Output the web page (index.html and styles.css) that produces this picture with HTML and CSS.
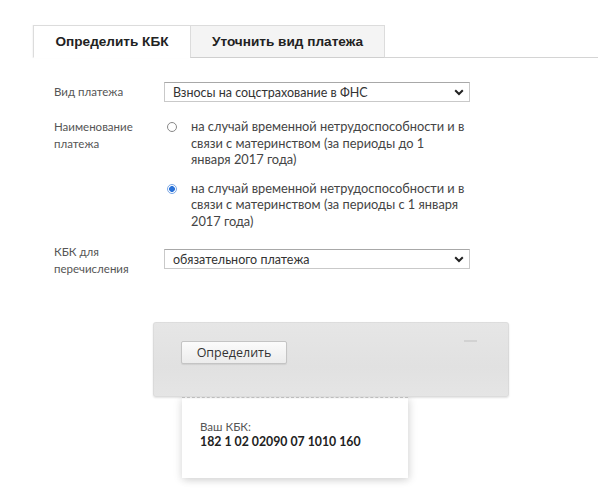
FILE: index.html
```html
<!DOCTYPE html>
<html lang="ru">
<head>
<meta charset="utf-8">
<link rel="stylesheet" href="styles.css">
</head>
<body>
<div class="page">
  <div class="tabs">
    <div class="tab active">Определить КБК</div>
    <div class="tab">Уточнить вид платежа</div>
    <div class="tab-rest"></div>
  </div>
  <div class="form">
    <div class="row row-select1">
      <div class="label">Вид платежа</div>
      <div class="select">
        <span>Взносы на соцстрахование в ФНС</span>
        <svg class="chev" width="10" height="7" viewBox="0 0 10 7"><path d="M1.2 1.3 L5 5 L8.8 1.3" fill="none" stroke="#222" stroke-width="2"/></svg>
      </div>
    </div>
    <div class="row row-radios">
      <div class="label">Наименование<br>платежа</div>
      <div class="options">
        <div class="option">
          <span class="radio"></span>
          <span class="opt-text">на случай временной нетрудоспособности и в<br>связи с материнством (за периоды до 1<br>января 2017 года)</span>
        </div>
        <div class="option">
          <span class="radio checked"></span>
          <span class="opt-text">на случай временной нетрудоспособности и в<br>связи с материнством (за периоды с 1 января<br>2017 года)</span>
        </div>
      </div>
    </div>
    <div class="row row-select2">
      <div class="label">КБК для<br>перечисления</div>
      <div class="select">
        <span>обязательного платежа</span>
        <svg class="chev" width="10" height="7" viewBox="0 0 10 7"><path d="M1.2 1.3 L5 5 L8.8 1.3" fill="none" stroke="#222" stroke-width="2"/></svg>
      </div>
    </div>
  </div>
  <div class="machine">
    <div class="panel">
      <button class="btn">Определить</button>
      <span class="slot"></span>
    </div>
    <div class="paper">
      <div class="paper-label">Ваш КБК:</div>
      <div class="paper-code">182 1 02 02090 07 1010 160</div>
    </div>
  </div>
</div>
</body>
</html>
```

FILE: styles.css
```css
html, body {
  margin: 0;
  padding: 0;
  background: #fff;
}
body {
  width: 598px;
  height: 503px;
  overflow: hidden;
  font-family: Lato, "Open Sans", "Liberation Sans", sans-serif;
  color: #333;
}
.page {
  padding-top: 25px;
}
.tabs {
  display: flex;
  padding-left: 33px;
  height: 33px;
}
.tab {
  box-sizing: border-box;
  height: 33px;
  display: flex;
  align-items: center;
  justify-content: center;
  font-family: "Liberation Sans", Arial, sans-serif;
  font-weight: bold;
  font-size: 13.6px;
  color: #222;
  border: 1px solid #dcdcdc;
  border-bottom: 1px solid #cfcfcf;
  background: #f4f4f4;
}
.tab.active {
  width: 157px;
  background: #fff;
  border-bottom-color: #fff;
  border-right: none;
  box-shadow: -1px 0 1px rgba(0,0,0,0.03);
}
.tab:nth-child(2) {
  width: 195px;
}
.tab-rest {
  flex: 1;
  border-bottom: 1px solid #d4d4d4;
}
.form {
  padding-left: 54px;
  padding-top: 24px;
}
.row {
  display: flex;
  align-items: flex-start;
}
.label {
  width: 110px;
  font-size: 11.5px;
  line-height: 17px;
  color: #555;
}
.row-select1 .label {
  padding-top: 1px;
}
.select {
  box-sizing: border-box;
  width: 306px;
  height: 20px;
  border: 1px solid #c9c9c9;
  border-top-color: #a8a8a8;
  display: flex;
  align-items: center;
  justify-content: space-between;
  padding: 0 5px 0 8px;
  font-size: 12.5px;
  color: #333;
  background: #fff;
}
.chev {
  display: block;
}
.row-radios {
  margin-top: 16px;
}
.options {
  width: 320px;
}
.option {
  display: flex;
  align-items: flex-start;
  margin-bottom: 12px;
}
.radio {
  box-sizing: border-box;
  flex: none;
  width: 10px;
  height: 10px;
  border-radius: 50%;
  border: 1px solid #888;
  margin: 4px 14px 0 3px;
  background: #fff;
}
.radio.checked {
  border: 1px solid #7aa7e6;
  background: radial-gradient(circle, #2a72d8 0, #2a72d8 2.6px, #fff 3.2px);
}
.opt-text {
  font-size: 12.8px;
  line-height: 16.5px;
  color: #444;
  white-space: nowrap;
}
.row-select2 {
  margin-top: 8px;
}
.row-select2 .label {
  margin-top: -6px;
}
.machine {
  margin-top: 45px;
  margin-left: 153px;
  width: 356px;
}
.panel {
  position: relative;
  box-sizing: border-box;
  height: 75px;
  border-radius: 3px;
  background: linear-gradient(180deg, #e6e6e6 0%, #e1e1e1 60%, #e5e5e5 100%);
  box-shadow: 0 1px 2px rgba(0,0,0,0.12), inset 0 0 0 1px rgba(0,0,0,0.04);
  padding: 19px 0 0 28px;
}
.btn {
  box-sizing: border-box;
  width: 106px;
  height: 23px;
  border: 1px solid #c4c4c4;
  border-radius: 2px;
  background: linear-gradient(180deg, #fbfbfb 0%, #ececec 100%);
  box-shadow: 0 1px 1px rgba(0,0,0,0.08);
  font-family: "Open Sans", "Liberation Sans", sans-serif;
  font-size: 12.5px;
  color: #333;
  padding: 0;
}
.slot {
  position: absolute;
  right: 32px;
  top: 18px;
  width: 13px;
  height: 2px;
  background: #d2d2d2;
}
.paper {
  box-sizing: border-box;
  margin-left: 29px;
  width: 226px;
  height: 81px;
  background: #fff;
  border-top: 1px dashed #cfcfcf;
  box-shadow: 2px 2px 8px rgba(0,0,0,0.12), -2px 2px 8px rgba(0,0,0,0.08);
  padding: 21px 0 0 18px;
}
.paper-label {
  font-size: 11.5px;
  color: #555;
  line-height: 15px;
}
.paper-code {
  font-size: 12.3px;
  font-weight: bold;
  color: #222;
  line-height: 16px;
}
```
